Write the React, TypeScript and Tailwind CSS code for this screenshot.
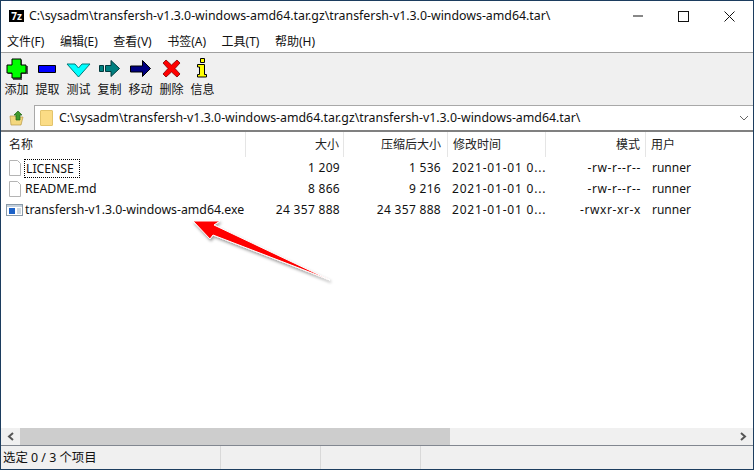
import React from 'react';

const font = { fontFamily: '"Noto Sans", "Noto Sans CJK SC", sans-serif' };

const menus = ['文件(F)', '编辑(E)', '查看(V)', '书签(A)', '工具(T)', '帮助(H)'];

const tools: { label: string; icon: React.ReactNode }[] = [
  {
    label: '添加',
    icon: (
      <>
        <path d="M7 2h9v6h6v8h-6v6H7v-6H2V8h5z" fill="#555" />
        <path d="M6 1h9v6h5v8h-5v5H6v-5H1V7h5z" fill="#00ff00" stroke="#000" />
      </>
    ),
  },
  {
    label: '提取',
    icon: <path d="M1.5 7.5h17v7h-17z" fill="#0000ff" stroke="#000" />,
  },
  {
    label: '测试',
    icon: <path d="M-1 6H7L10.5 10 14 6H22L10.5 19z" fill="#00ffff" stroke="#007a7a" />,
  },
  {
    label: '复制',
    icon: (
      <path
        d="M0.5 7.5h4v6h-4z M6.5 7.5h5.5V2.5L20.5 10.5 12 18.5V13.5H6.5z"
        fill="#008080"
        stroke="#00393d"
      />
    ),
  },
  {
    label: '移动',
    icon: <path d="M0.5 8h12V2.5L20.5 10.5 12.5 18.5V14H0.5z" fill="#000080" stroke="#000" />,
  },
  {
    label: '删除',
    icon: (
      <path
        d="M5 2l5.5 5L16 2l3 3-5 5.5 5 5.5-3 3-5.5-5L5 19l-3-3 5-5.5L2 5z"
        fill="#ff0000"
        stroke="#7a0000"
        strokeWidth="0.8"
      />
    ),
  },
  {
    label: '信息',
    icon: (
      <path
        d="M8.5 0.5h4v4h-4z M5.5 6.5h7v10h2v2.5h-9V16.5h2V9h-2z"
        fill="#ffff00"
        stroke="#000"
      />
    ),
  },
];

const files = [
  { name: 'LICENSE', size: '1 209', packed: '1 536', mode: '-rw-r--r--', focus: true, exe: false },
  { name: 'README.md', size: '8 866', packed: '9 216', mode: '-rw-r--r--', focus: false, exe: false },
  {
    name: 'transfersh-v1.3.0-windows-amd64.exe',
    size: '24 357 888',
    packed: '24 357 888',
    mode: '-rwxr-xr-x',
    focus: false,
    exe: true,
  },
];

const FileIcon = ({ exe }: { exe: boolean }) =>
  exe ? (
    <svg width="17" height="16" viewBox="0 0 17 16" className="shrink-0">
      <rect x="0.5" y="2.5" width="16" height="11" fill="#fff" stroke="#8a9aa8" />
      <rect x="1" y="3" width="15" height="2" fill="#c4d0dc" />
      <rect x="3" y="6" width="6" height="6" fill="#1c62c8" />
      <path d="M11 7h4M11 9h4M11 11h4" stroke="#9fb0c0" />
    </svg>
  ) : (
    <svg width="17" height="18" viewBox="-1 0 17 18" className="shrink-0">
      <path d="M2.5 1.5h8l3 3v12h-11z" fill="#fff" stroke="#b4b4b4" />
    </svg>
  );

export default function App() {
  return (
    <div
      className="w-[754px] h-[470px] flex flex-col bg-white border border-[#1c3d5f] overflow-hidden text-[12px] text-[#111] relative"
      style={font}
    >
      {/* title bar */}
      <div className="h-[29px] flex items-center shrink-0 pt-[1px]">
        <div className="w-[15px] h-[12px] ml-[8px] mr-[5px] bg-black text-white text-[10px] leading-[10px] font-bold text-center border border-black">
          7z
        </div>
        <span className="text-[12.35px] flex-1 truncate pt-[1px]">
          C:\sysadm\transfersh-v1.3.0-windows-amd64.tar.gz\transfersh-v1.3.0-windows-amd64.tar\
        </span>
        <svg width="12" height="2" className="mr-[34px]"><path d="M1 1h10" stroke="#111" /></svg>
        <svg width="11" height="11" className="mr-[35px]"><rect x="0.5" y="0.5" width="10" height="10" fill="none" stroke="#111" /></svg>
        <svg width="11" height="11" className="mr-[18px]"><path d="M0.5 0.5l10 10M10.5 0.5l-10 10" stroke="#111" /></svg>
      </div>

      {/* menu bar */}
      <div className="h-[21px] flex items-center shrink-0 pl-[6px] pt-[1px] gap-[15.5px] border-b border-[#a0a0a0] box-content">
        {menus.map((m) => (
          <span key={m} className="whitespace-nowrap">{m}</span>
        ))}
      </div>

      {/* toolbar */}
      <div className="h-[52px] flex shrink-0 bg-[#f0f0f0] pt-[5px]">
        {tools.map((t) => (
          <div key={t.label} className="w-[31px] flex flex-col items-center">
            <svg width="21" height="21" viewBox="0 0 21 21" className="overflow-visible">{t.icon}</svg>
            <span className="leading-[16px] mt-[3px] whitespace-nowrap">{t.label}</span>
          </div>
        ))}
      </div>

      {/* address row */}
      <div className="h-[27px] flex shrink-0 bg-[#f0f0f0] border-b-2 border-[#808080]">
        <div className="w-[33px] flex items-center justify-center">
          <svg width="17" height="17" viewBox="0 0 17 17">
            <path d="M1 7h5l1 1h7l-2 8H2z" fill="#f3d77e" stroke="#b99a45" strokeWidth="0.7" />
            <path d="M9 2l4 4h-2v5H7V6H5z" fill="#3f9a2c" stroke="#1f6414" strokeWidth="0.7" />
          </svg>
        </div>
        <div className="flex-1 bg-white flex items-center border-l border-t border-[#a8a8a8]">
          <div className="w-[13px] h-[16px] ml-[5px] mr-[6px] bg-[#fbdc85] border border-[#e3c46c] rounded-[1px]" />
          <span className="flex-1 text-[12.35px] pt-[1px]">C:\sysadm\transfersh-v1.3.0-windows-amd64.tar.gz\transfersh-v1.3.0-windows-amd64.tar\</span>
          <svg width="10" height="6" className="mr-[4px]"><path d="M1 1l4 4 4-4" fill="none" stroke="#666" /></svg>
        </div>
      </div>

      {/* file list */}
      <div className="flex-1 min-h-0">
        <div className="h-[25px] flex items-center text-[#222]">
          <span className="w-[245px] pl-[8px] border-r border-[#e5e5e5] h-full flex items-center">名称</span>
          <span className="w-[98px] pr-[4px] text-right border-r border-[#e5e5e5] h-full flex items-center justify-end">大小</span>
          <span className="w-[104px] pr-[6px] border-r border-[#e5e5e5] h-full flex items-center justify-end">压缩后大小</span>
          <span className="w-[98px] pl-[5px] border-r border-[#e5e5e5] h-full flex items-center">修改时间</span>
          <span className="w-[100px] pr-[5px] border-r border-[#e5e5e5] h-full flex items-center justify-end">模式</span>
          <span className="pl-[5px]">用户</span>
        </div>
        {files.map((f) => (
          <div key={f.name} className="h-[21px] flex items-center pt-[1px]">
            <div className="w-[245px] flex items-center pl-[5px]">
              <FileIcon exe={f.exe} />
              <span
                className={
                  f.focus
                    ? 'ml-[1px] border border-dotted border-black pl-[1px] pr-[5px] leading-[17px] text-[12.2px]'
                    : 'px-[2px] whitespace-nowrap text-[12.3px]'
                }
              >
                {f.name}
              </span>
            </div>
            <span className="w-[98px] pr-[4px] text-right tracking-[0.3px]">{f.size}</span>
            <span className="w-[104px] pr-[7px] text-right tracking-[0.3px]">{f.packed}</span>
            <span className="w-[98px] pl-[4px] whitespace-nowrap tracking-[0.8px]">2021-01-01 0...</span>
            <span className="w-[100px] pr-[5px] text-right tracking-[0.6px]">{f.mode}</span>
            <span className="pl-[6px]">runner</span>
          </div>
        ))}
      </div>

      {/* horizontal scrollbar */}
      <div className="h-[17px] flex shrink-0 bg-[#f0f0f0] border-b border-[#828790] box-content">
        <div className="w-[19px] flex items-center justify-center">
          <svg width="8" height="9"><path d="M6 1L2 4.5 6 8" fill="none" stroke="#555" strokeWidth="2" /></svg>
        </div>
        <div className="w-[430px] bg-[#cdcdcd]" />
        <div className="flex-1 flex items-center justify-end pr-[6px]">
          <svg width="8" height="9"><path d="M2 1l4 3.5L2 8" fill="none" stroke="#555" strokeWidth="2" /></svg>
        </div>
      </div>

      {/* status bar */}
      <div className="h-[23px] flex shrink-0 bg-[#f0f0f0] text-[12.4px]">
        <div className="w-[220px] pl-[2px] pt-[1px] flex items-center border-r border-[#d9d9d9]">选定 0 / 3 个项目</div>
        <div className="w-[100px] border-r border-[#d9d9d9]" />
        <div className="w-[100px] border-r border-[#d9d9d9]" />
      </div>

      {/* red arrow annotation */}
      <svg width="170" height="90" viewBox="0 0 170 90" className="absolute left-[180px] top-[207px] pointer-events-none">
        <defs>
          <filter id="arrowShadow" x="-10%" y="-10%" width="130%" height="130%">
            <feDropShadow dx="1" dy="2" stdDeviation="1.5" floodColor="#000" floodOpacity="0.4" />
          </filter>
        </defs>
        <path
          d="M12 13L39 13 33 17 149 72 32 27 29 31z"
          fill="#ff0000"
          stroke="#fff"
          strokeWidth="1"
          filter="url(#arrowShadow)"
        />
      </svg>
    </div>
  );
}
